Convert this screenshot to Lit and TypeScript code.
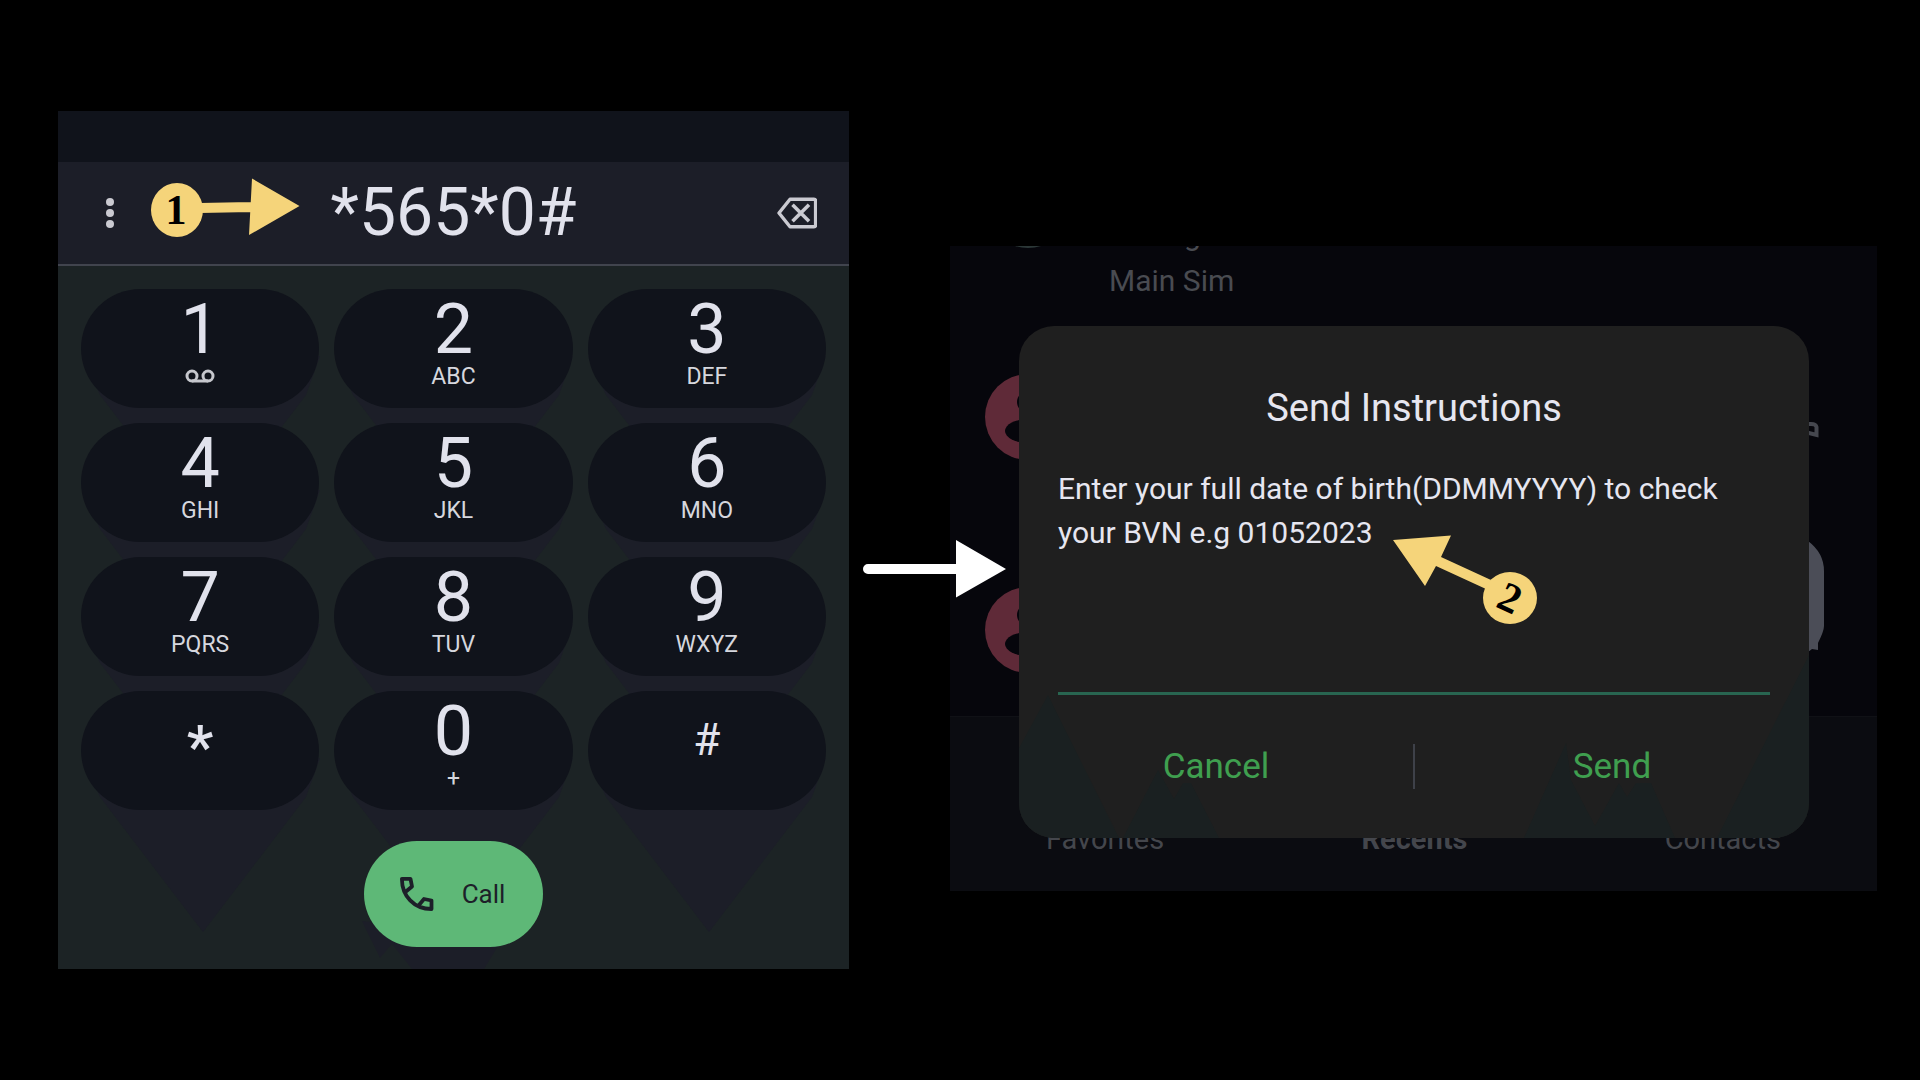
import { LitElement, html, svg, css, nothing } from "lit";
import { customElement } from "lit/decorators.js";

interface Key {
  main: string;
  sub?: string;
  kind?: "star" | "hash" | "voicemail";
}

const KEYS: Key[] = [
  { main: "1", kind: "voicemail" },
  { main: "2", sub: "ABC" },
  { main: "3", sub: "DEF" },
  { main: "4", sub: "GHI" },
  { main: "5", sub: "JKL" },
  { main: "6", sub: "MNO" },
  { main: "7", sub: "PQRS" },
  { main: "8", sub: "TUV" },
  { main: "9", sub: "WXYZ" },
  { main: "*", kind: "star" },
  { main: "0", sub: "+" },
  { main: "#", kind: "hash" },
];

@customElement("dial-pad")
export class DialPad extends LitElement {
  static styles = css`
    :host {
      display: block;
      font-family: Roboto, "Liberation Sans", sans-serif;
      color: #e1e2ec;
      background: #1c2325;
    }
    button,
    input {
      font: inherit;
      color: inherit;
      border: 0;
      padding: 0;
      margin: 0;
      background: none;
    }
    .strip {
      height: 51px;
      background: #10131b;
    }
    .display {
      position: relative;
      display: flex;
      align-items: center;
      height: 102px;
      padding: 0 32px;
      background: #1c1e28;
      border-bottom: 2px solid #41444e;
    }
    .icon {
      display: flex;
      flex: none;
      color: #cacad1;
    }
    .number {
      flex: 1;
      min-width: 0;
      text-align: center;
      font-size: 66px;
      line-height: 80px;
      outline: none;
    }
    .step {
      position: absolute;
      left: 92px;
      top: 12px;
    }
    .step text {
      font: bold 42px "Liberation Serif", serif;
    }
    .pad {
      position: relative;
      display: flex;
      flex-direction: column;
      align-items: center;
      gap: 31px;
      padding: 23px 23px 22px;
    }
    .shade {
      position: absolute;
      inset: 0;
      width: 100%;
      height: 100%;
    }
    .keys {
      position: relative;
      align-self: stretch;
      display: grid;
      grid-template-columns: repeat(3, minmax(0, 1fr));
      gap: 15px;
    }
    .key {
      display: flex;
      flex-direction: column;
      align-items: center;
      gap: 5px;
      height: 119px;
      padding-top: 10px;
      box-sizing: border-box;
      border-radius: 60px;
      background: #10131b;
    }
    .main {
      font-size: 70px;
      line-height: 60px;
    }
    .star .main {
      font-size: 60px;
      line-height: 92px;
      font-weight: 500;
    }
    .hash .main {
      font-size: 44px;
      line-height: 78px;
    }
    .sub {
      font-size: 23px;
      line-height: 26px;
      color: #d6d7de;
    }
    .call {
      position: relative;
      display: flex;
      align-items: center;
      gap: 28px;
      height: 106px;
      padding: 0 38px 0 36px;
      border-radius: 53px;
      background: #5eb877;
      color: #1d1f29;
      font-size: 26px;
    }
  `;

  private renderKey(k: Key) {
    return html`<button class="key ${k.kind ?? ""}" type="button">
      <span class="main">${k.main}</span>
      ${k.sub ? html`<span class="sub">${k.sub}</span>` : nothing}
      ${k.kind === "voicemail"
        ? html`<svg width="30" height="26" viewBox="0 0 30 26" fill="none" stroke="#c6c7cd" stroke-width="3" aria-hidden="true">
            <circle cx="7" cy="12" r="5" />
            <circle cx="23" cy="12" r="5" />
            <path d="M7 17H23" />
          </svg>`
        : nothing}
    </button>`;
  }

  private renderShade() {
    const columns = [0, 253, 506];
    const rows = [0, 134, 268, 402];
    return html`<svg class="shade" viewBox="0 0 791 703" preserveAspectRatio="none" fill="#1c1e28" aria-hidden="true">
      ${columns.map((x) =>
        rows.map(
          (y) => svg`<path d="M${x + 24} ${y + 90}L${x + 42} ${y + 129}L${x + 145} ${y + 264}L${x + 248} ${y + 129}L${x + 262} ${y + 90}Z" />`
        )
      )}
      <path d="M304 655L322 692L334 678L354 703H426L440 680V670Z" />
    </svg>`;
  }

  render() {
    return html`
      <div class="strip"></div>
      <div class="display">
        <button class="icon" type="button" aria-label="More options">
          <svg width="40" height="40" viewBox="0 0 40 40" fill="currentColor">
            <circle cx="20" cy="9" r="4" />
            <circle cx="20" cy="20" r="4" />
            <circle cx="20" cy="31" r="4" />
          </svg>
        </button>
        <input class="number" type="text" aria-label="Phone number" .value=${"*565*0#"} />
        <button class="icon" type="button" aria-label="Delete">
          <svg width="40" height="40" viewBox="0 0 40 40" fill="none" stroke="currentColor" stroke-width="3" stroke-linejoin="round">
            <path d="M2 20L13 6.2H37Q38.600 6.200 38.600 8V32Q38.600 33.800 37 33.800H13Z" stroke-width="3.400" />
            <path d="M15.500 11.800L32 28.200M32 11.800L15.500 28.200" stroke-width="3.600" />
          </svg>
        </button>
        <svg class="step" width="152" height="64" viewBox="0 0 152 64" aria-hidden="true">
          <path fill="#f5d47a" d="M50 29L101 28V38L50 39ZM102 4.500L149.500 32L99 61Z" />
          <ellipse cx="27" cy="36" rx="26" ry="27" fill="#f5d47a" />
          <text x="26" y="50" text-anchor="middle">1</text>
        </svg>
      </div>
      <div class="pad">
        ${this.renderShade()}
        <div class="keys">${KEYS.map((k) => this.renderKey(k))}</div>
        <button class="call" type="button">
          <svg width="34" height="34" viewBox="0 0 34 34" fill="none" stroke="currentColor" stroke-width="3.800" stroke-linejoin="round" aria-hidden="true">
            <path d="M19 28L24 22L31.500 23.500V32C14 32 2 19 1.900 1.900H10.500L12 9.500L6 14.500" />
          </svg>
          <span>Call</span>
        </button>
      </div>
    `;
  }
}

@customElement("ussd-dialog")
export class UssdDialog extends LitElement {
  static styles = css`
    :host {
      position: relative;
      display: block;
      overflow: hidden;
      border-radius: 35px;
      background: #1f1f1f;
      color: #e6e6f0;
      font-family: Roboto, "Liberation Sans", sans-serif;
    }
    .shade {
      position: absolute;
      inset: 0;
      width: 100%;
      height: 100%;
    }
    .body {
      position: relative;
      display: flex;
      flex-direction: column;
      padding: 58px 39px 0;
    }
    .title {
      margin: 0 0 35px;
      font-size: 38px;
      line-height: 48px;
      font-weight: 400;
      text-align: center;
    }
    .message {
      font-size: 30px;
      line-height: 44px;
    }
    .answer {
      height: 140px;
      box-sizing: border-box;
      border: 0;
      border-bottom: 3px solid #286550;
      padding: 60px 0 0;
      background: none;
      color: inherit;
      font: inherit;
      font-size: 30px;
      outline: none;
    }
    .actions {
      position: relative;
      display: grid;
      grid-template-columns: 1fr 2px 1fr;
      padding: 49px 0;
    }
    .action {
      border: 0;
      padding: 0;
      background: none;
      color: #3f9f4f;
      font: inherit;
      font-size: 35px;
      line-height: 45px;
    }
    .rule {
      background: #3e4149;
    }
    .step {
      position: absolute;
      left: 374px;
      top: 208px;
    }
    .step text {
      font: bold 42px "Liberation Serif", serif;
    }
  `;

  render() {
    return html`
      <svg class="shade" viewBox="0 0 790 512" preserveAspectRatio="none" fill="#1a2021" aria-hidden="true">
        <path d="M0 422L29 369L100 512H0Z" />
        <path d="M104 512L139 444L155 473L164 457H172L200 512Z" />
        <path d="M505 512L547 417L552 454L576 500L600 457L608 471L617 457H632L656 512Z" />
        <path d="M698 512L790 329V512Z" />
      </svg>
      <div class="body">
        <h2 class="title">Send Instructions</h2>
        <label class="message" for="answer">Enter your full date of birth(DDMMYYYY) to check your BVN e.g 01052023</label>
        <input class="answer" id="answer" type="text" />
      </div>
      <div class="actions">
        <button class="action" type="button">Cancel</button>
        <span class="rule"></span>
        <button class="action" type="button">Send</button>
      </div>
      <svg class="step" width="148" height="94" viewBox="0 0 148 94" aria-hidden="true">
        <path fill="#f5d47a" d="M0 6L58 1.500L48 23L98 46L93 55L43 32L32 52Z" />
        <ellipse cx="117" cy="64" rx="27" ry="26" fill="#f5d47a" />
        <text x="117" y="78" text-anchor="middle" transform="rotate(25 117 64)">2</text>
      </svg>
    `;
  }
}

@customElement("recents-screen")
export class RecentsScreen extends LitElement {
  static styles = css`
    :host {
      display: grid;
      background: #06060c;
      font-family: Roboto, "Liberation Sans", sans-serif;
      color: #494b51;
    }
    .screen,
    .dialog {
      grid-area: 1 / 1;
      min-width: 0;
    }
    .dialog {
      margin: 80px 68px 53px 69px;
    }
    .screen {
      display: flex;
      flex-direction: column;
      overflow: hidden;
    }
    .list {
      flex: 1;
      display: flex;
      flex-direction: column;
    }
    .row {
      display: flex;
      justify-content: space-between;
      align-items: flex-start;
      height: 213px;
      padding: 0 52px 0 35px;
    }
    .last {
      height: 193px;
    }
    .first {
      height: 64px;
      justify-content: flex-start;
      gap: 38px;
      overflow: hidden;
    }
    .names {
      display: flex;
      flex-direction: column;
      gap: 3px;
      margin-top: -31px;
      font-size: 30px;
    }
    .name {
      padding-left: 75px;
      line-height: 40px;
    }
    .sim {
      line-height: 46px;
    }
    .avatar {
      flex: none;
      margin-top: 64px;
    }
    .first .avatar {
      margin-top: -84px;
    }
    .glyph {
      flex: none;
      margin-top: 18px;
    }
    .nav {
      display: flex;
      justify-content: space-between;
      height: 175px;
      box-sizing: border-box;
      padding: 102px 96px 0;
      border-top: 1px solid #101116;
      background: #0b0c11;
    }
    .tab {
      color: #44464c;
      font-size: 29px;
      line-height: 40px;
      text-decoration: none;
    }
    .current {
      font-weight: 700;
    }
  `;

  private avatar(fill: string) {
    return html`<svg class="avatar" width="86" height="86" viewBox="0 0 86 86" aria-hidden="true">
      <circle cx="43" cy="43" r="43" fill=${fill} />
      <circle cx="43" cy="28" r="11" fill="#06060c" />
      <ellipse cx="43" cy="57" rx="23" ry="12" fill="#06060c" />
    </svg>`;
  }

  render() {
    return html`
      <div class="screen">
        <div class="list">
          <div class="row first">
            ${this.avatar("#2c3838")}
            <div class="names">
              <span class="name">g</span>
              <span class="sim">Main Sim</span>
            </div>
          </div>
          <div class="row">
            ${this.avatar("#5f2a38")}
            <svg class="glyph" width="40" height="120" viewBox="0 0 40 120" fill="none" stroke="#45474f" stroke-width="4" aria-hidden="true">
              <path d="M10 96H26Q31 96 31.500 99V107L24 105H10" />
            </svg>
          </div>
          <div class="row last">
            ${this.avatar("#5f2a38")}
            <svg class="glyph" width="40" height="120" viewBox="0 0 40 120" aria-hidden="true">
              <path fill="#4b4d57" d="M0 0H23Q39 12 39 30V85Q39 90 33 102V109L27 108L23 111H0Z" />
            </svg>
          </div>
        </div>
        <nav class="nav">
          <a class="tab" href="#favorites">Favorites</a>
          <a class="tab current" href="#recents">Recents</a>
          <a class="tab" href="#contacts">Contacts</a>
        </nav>
      </div>
      <ussd-dialog class="dialog"></ussd-dialog>
    `;
  }
}

@customElement("app-root")
export class AppRoot extends LitElement {
  static styles = css`
    :host {
      display: block;
      background: #000;
    }
    .stage {
      display: grid;
      grid-template-columns: minmax(0, 791fr) minmax(0, 927fr);
      column-gap: 101px;
      align-items: center;
      min-height: 100vh;
      box-sizing: border-box;
      padding: 0 43px 0 58px;
    }
    .result {
      position: relative;
      padding-top: 57px;
    }
    .flow {
      position: absolute;
      left: -87px;
      top: 350px;
    }
  `;

  render() {
    return html`
      <main class="stage">
        <dial-pad></dial-pad>
        <div class="result">
          <recents-screen></recents-screen>
          <svg class="flow" width="144" height="60" viewBox="0 0 144 60" fill="#fff" aria-hidden="true">
            <path d="M5 25H93V1L143 30L93 58.500V35H5A5 5 0 0 1 5 25Z" />
          </svg>
        </div>
      </main>
    `;
  }
}
